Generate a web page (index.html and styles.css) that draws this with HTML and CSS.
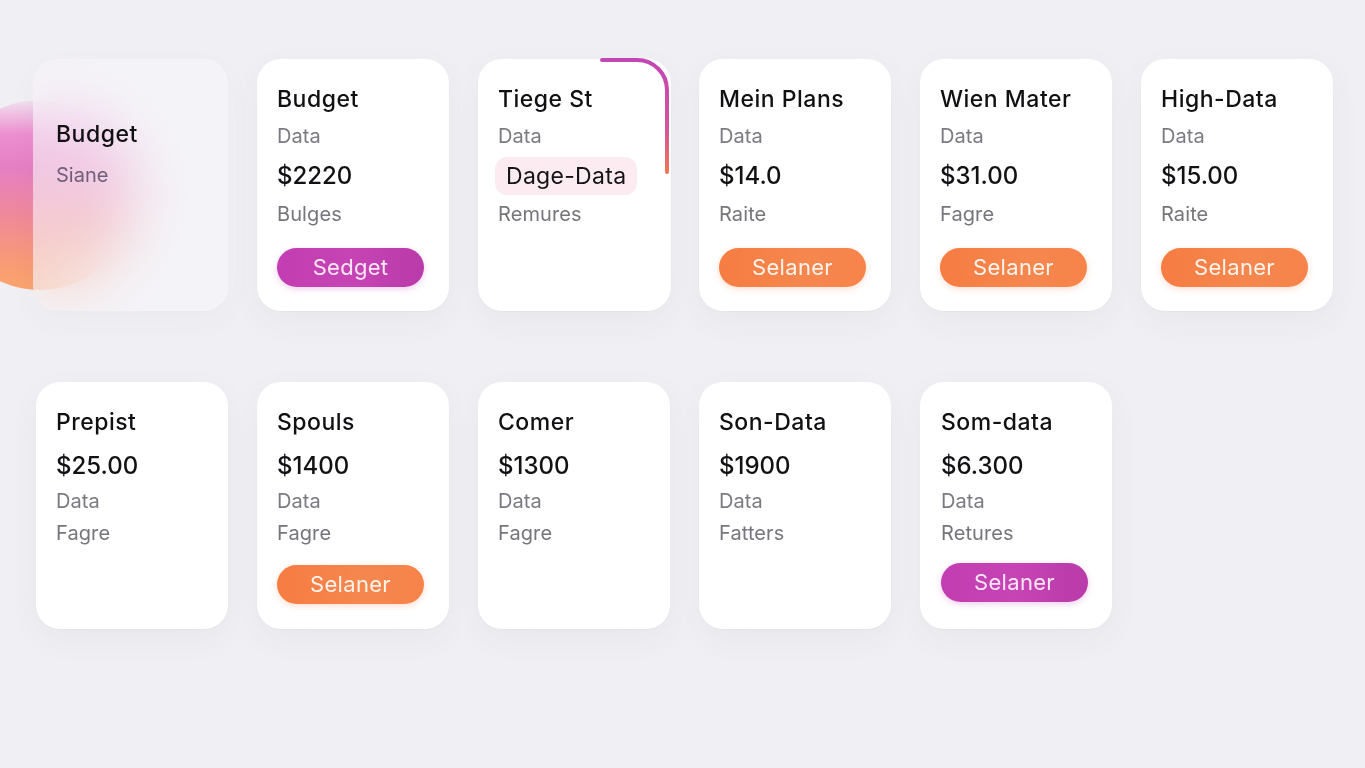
FILE: index.html
```html
<!DOCTYPE html>
<html lang="en">
<head>
<meta charset="utf-8">
<title>Plans</title>
<link rel="stylesheet" href="styles.css">
</head>
<body>
<main class="board">
  <div class="blob" aria-hidden="true"></div>

  <section class="card card--glass">
    <h2 class="card__title">Budget</h2>
    <p class="card__hint">Siane</p>
  </section>

  <section class="card">
    <h2 class="card__title">Budget</h2>
    <p class="card__label">Data</p>
    <p class="card__price">$2220</p>
    <p class="card__label card__label--sub">Bulges</p>
    <button class="btn btn--purple">Sedget</button>
  </section>

  <section class="card card--accent">
    <svg class="accent" width="72" height="120" viewBox="0 0 72 120" aria-hidden="true">
      <defs>
        <linearGradient id="ag" x1="0" y1="0" x2="0" y2="1">
          <stop offset="0" stop-color="#c247b4"/>
          <stop offset="0.6" stop-color="#d4559a"/>
          <stop offset="1" stop-color="#f07556"/>
        </linearGradient>
      </defs>
      <path d="M 3 2 H 38 A 30 30 0 0 1 68 32 V 114" fill="none" stroke="url(#ag)" stroke-width="4" stroke-linecap="round"/>
    </svg>
    <h2 class="card__title">Tiege St</h2>
    <p class="card__label">Data</p>
    <p class="chip">Dage-Data</p>
    <p class="card__label card__label--sub">Remures</p>
  </section>

  <section class="card">
    <h2 class="card__title">Mein Plans</h2>
    <p class="card__label">Data</p>
    <p class="card__price">$14.0</p>
    <p class="card__label card__label--sub">Raite</p>
    <button class="btn btn--orange">Selaner</button>
  </section>

  <section class="card">
    <h2 class="card__title">Wien Mater</h2>
    <p class="card__label">Data</p>
    <p class="card__price">$31.00</p>
    <p class="card__label card__label--sub">Fagre</p>
    <button class="btn btn--orange">Selaner</button>
  </section>

  <section class="card">
    <h2 class="card__title">High-Data</h2>
    <p class="card__label">Data</p>
    <p class="card__price">$15.00</p>
    <p class="card__label card__label--sub">Raite</p>
    <button class="btn btn--orange">Selaner</button>
  </section>

  <section class="card card--b">
    <h2 class="card__title">Prepist</h2>
    <p class="card__price">$25.00</p>
    <p class="card__label">Data</p>
    <p class="card__label card__label--sub">Fagre</p>
  </section>

  <section class="card card--b">
    <h2 class="card__title">Spouls</h2>
    <p class="card__price">$1400</p>
    <p class="card__label">Data</p>
    <p class="card__label card__label--sub">Fagre</p>
    <button class="btn btn--orange">Selaner</button>
  </section>

  <section class="card card--b">
    <h2 class="card__title">Comer</h2>
    <p class="card__price">$1300</p>
    <p class="card__label">Data</p>
    <p class="card__label card__label--sub">Fagre</p>
  </section>

  <section class="card card--b">
    <h2 class="card__title">Son-Data</h2>
    <p class="card__price">$1900</p>
    <p class="card__label">Data</p>
    <p class="card__label card__label--sub">Fatters</p>
  </section>

  <section class="card card--b card--tight">
    <h2 class="card__title">Som-data</h2>
    <p class="card__price">$6.300</p>
    <p class="card__label">Data</p>
    <p class="card__label card__label--sub">Retures</p>
    <button class="btn btn--purple">Selaner</button>
  </section>
</main>
</body>
</html>
```

FILE: styles.css
```css
* { box-sizing: border-box; }

html, body {
  margin: 0;
  height: 100%;
}

body {
  background: #f0f0f4;
  font-family: Inter, "Noto Sans", "Liberation Sans", sans-serif;
  color: #111114;
  overflow: hidden;
}

:where(.card) :where(p, h2) { margin: 0; }

.board {
  position: relative;
  display: grid;
  grid-template-columns: repeat(6, 192px);
  grid-template-rows: 252px 247px;
  column-gap: 29px;
  row-gap: 71px;
  padding: 59px 0 0 36px;
}

.blob {
  position: absolute;
  left: -55px;
  top: 100px;
  width: 190px;
  height: 190px;
  border-radius: 50%;
  background: linear-gradient(180deg,
    rgba(240, 170, 220, 0.2) 0%,
    #ec8fd0 18%,
    #e67fc4 35%,
    #f08a98 62%,
    #f89a76 85%,
    #fba56c 100%);
  z-index: 0;
}

.card {
  position: relative;
  z-index: 1;
  background: #ffffff;
  border-radius: 24px;
  padding: 24px 20px 0 20px;
  box-shadow: 0 10px 30px rgba(40, 40, 80, 0.05), 0 1px 3px rgba(40, 40, 80, 0.03);
}

.card__title {
  font-size: 23px;
  font-weight: 500;
  line-height: 32px;
  letter-spacing: 0.5px;
  color: #111114;
  white-space: nowrap;
}

.card__label {
  font-size: 20px;
  line-height: 28px;
  letter-spacing: 0.1px;
  color: #7a7a82;
  margin-top: 7px;
}

.card__label--sub {
  margin-top: 8px;
  color: #75757c;
}

.card__price {
  font-size: 24px;
  font-weight: 450;
  line-height: 32px;
  margin-top: 10px;
  color: #121215;
}

.btn {
  display: block;
  width: 147px;
  height: 39px;
  margin-top: 20px;
  border: 0;
  border-radius: 20px;
  font-family: inherit;
  font-size: 22px;
  letter-spacing: 0.3px;
  line-height: 39px;
  padding: 0;
  color: #fff3ec;
  cursor: pointer;
}

.btn--orange {
  background: linear-gradient(90deg, #f67c42, #f5874e 60%, #f6834a);
  box-shadow: 0 2px 6px rgba(246, 124, 66, 0.25);
}

.btn--purple {
  background: linear-gradient(90deg, #c13db1, #c744b5 50%, #b93aa9);
  color: #fbe6f6;
  box-shadow: 0 2px 6px rgba(193, 61, 177, 0.25);
}

/* glass card with the blurred blob behind */
.card--glass {
  margin-left: -3px;
  width: 195px;
  background: rgba(246, 245, 250, 0.6);
  backdrop-filter: blur(28px);
  -webkit-backdrop-filter: blur(28px);
  box-shadow: 0 10px 30px rgba(40, 40, 80, 0.03);
  padding: 59px 23px 0 23px;
}

.card__hint {
  font-size: 20px;
  line-height: 28px;
  margin-top: 11px;
  color: #6d5f7c;
}

/* accent card */
.card--accent {
  width: 193px;
}

.accent {
  position: absolute;
  top: -1px;
  right: 0;
}

.card--accent .chip {
  display: inline-block;
  height: 38px;
  margin: 7px 0 5px -3px;
  padding: 0 11px;
  border-radius: 12px;
  background: #fcebf1;
  font-size: 23px;
  letter-spacing: 0.3px;
  line-height: 38px;
  color: #141416;
}

.card--accent .card__label--sub {
  margin-top: 0;
  display: block;
}

/* second row: title, price, data, sub */
.card--b .card__price {
  margin-top: 12px;
}

.card--b .card__label {
  margin-top: 5px;
}

.card--b .card__label--sub {
  margin-top: 4px;
}

.card--b .btn {
  margin-top: 18px;
}

.card--tight .btn {
  margin-top: 16px;
}

.card--b.card--tight {
  padding-left: 21px;
}
```
